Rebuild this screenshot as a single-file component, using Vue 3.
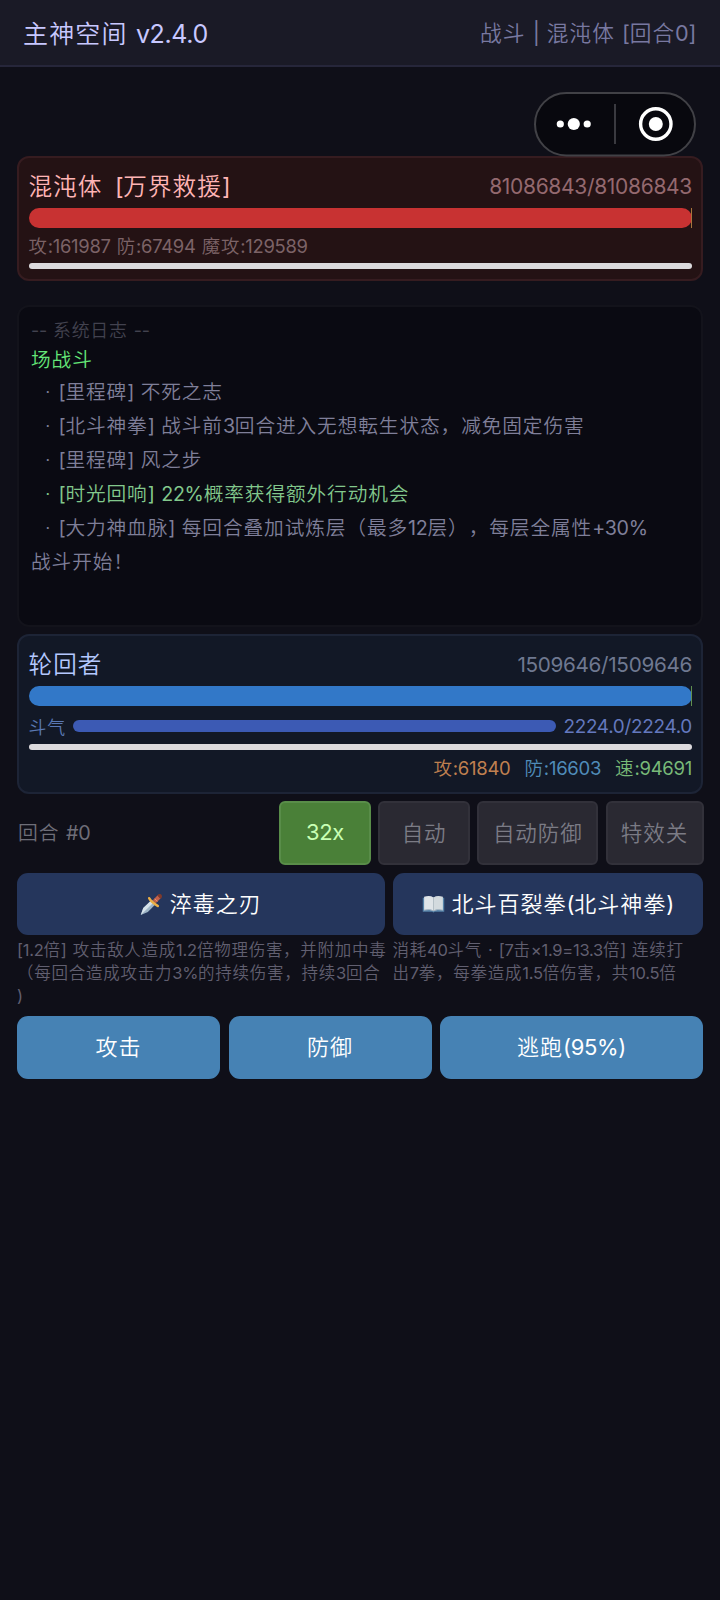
<script setup>
import { h } from 'vue'

// Splits mixed text into Han and Latin runs so that each gets its own tracking.
const T = (props) =>
  h('span', { class: 'mix' },
    (props.t.match(/[\u3000-\u9fff\uff00-\uffef]+|[^\u3000-\u9fff\uff00-\uffef]+/g) || []).map((r) =>
      h('span', { class: /^[\u3000-\u9fff\uff00-\uffef]/.test(r) ? 'han' : 'lat' }, r)))
T.props = ['t']

const log = [
  { t: '场战斗', c: 'bright first' },
  { t: '[里程碑] 不死之志', c: 'item' },
  { t: '[北斗神拳] 战斗前3回合进入无想転生状态，减免固定伤害', c: 'item' },
  { t: '[里程碑] 风之步', c: 'item' },
  { t: '[时光回响] 22%概率获得额外行动机会', c: 'item good' },
  { t: '[大力神血脉] 每回合叠加试炼层（最多12层），每层全属性+30%', c: 'item' },
  { t: '战斗开始！', c: '' },
]
</script>

<template>
  <div class="page">
    <header class="top">
      <T class="brand" t="主神空间 v2.4.0" />
      <T class="where" t="战斗 | 混沌体 [回合0]" />
    </header>

    <div class="capsule">
      <svg width="162" height="65" viewBox="0 0 162 65">
        <rect x="1" y="1" width="160" height="62.5" rx="31.2" fill="#08080e" stroke="#414146" stroke-width="2" />
        <circle cx="26.3" cy="32" r="3.6" fill="#fff" />
        <circle cx="39.8" cy="32" r="6.1" fill="#fff" />
        <circle cx="53.2" cy="32" r="3.6" fill="#fff" />
        <rect x="80" y="12" width="2" height="40" fill="#3a3a40" />
        <circle cx="121.8" cy="32" r="15.2" fill="none" stroke="#fff" stroke-width="3.4" />
        <circle cx="121.8" cy="32" r="7" fill="#fff" />
      </svg>
    </div>

    <section class="card enemy">
      <div class="head">
        <T class="name" t="混沌体  [万界救援]" />
        <T class="hp" t="81086843/81086843" />
      </div>
      <div class="bar"><i></i></div>
      <div class="stats"><T t="攻:161987 防:67494 魔攻:129589" /></div>
      <div class="action"></div>
    </section>

    <section class="log">
      <div class="sys"><T t="-- 系统日志 --" /></div>
      <div v-for="(l, i) in log" :key="i" class="line" :class="l.c">
        <span v-if="l.c.startsWith('item')" class="dot">·</span><T :t="l.t" />
      </div>
    </section>

    <section class="card player">
      <div class="head">
        <T class="name" t="轮回者" />
        <T class="hp" t="1509646/1509646" />
      </div>
      <div class="bar"><i></i></div>
      <div class="energy">
        <T class="elabel" t="斗气" />
        <div class="ebar"></div>
        <T class="eval" t="2224.0/2224.0" />
      </div>
      <div class="action"></div>
      <div class="stats">
        <T class="atk" t="攻:61840" />
        <T class="def" t="防:16603" />
        <T class="spd" t="速:94691" />
      </div>
    </section>

    <div class="controls">
      <T class="round" t="回合 #0" />
      <button class="ctl on"><T t="32x" /></button>
      <button class="ctl"><T t="自动" /></button>
      <button class="ctl wide"><T t="自动防御" /></button>
      <button class="ctl mid"><T t="特效关" /></button>
    </div>

    <div class="skills">
      <div class="skill">
        <button class="cast">
          <svg width="23" height="23" viewBox="0 0 24 24">
            <path d="M.8 23 3.4 15.6 12.2 7.4l4.2 4.2-8.2 8.2z" fill="#9db4c6" />
            <path d="M.8 23 3.4 15.6 12.2 7.4l2.2 2.2z" fill="#d6e2ea" />
            <path d="M13.4 7.6 18.4 2.4l3.2 3.2-5.2 5z" fill="#c4614a" />
            <path d="m15.4 6 2.8 2.8" stroke="#e2917a" stroke-width="1" />
            <path d="M18 2.6Q19.6.4 22 1.4q1.8 1.6.4 4l-1.2.6z" fill="#7f3a2c" />
            <path d="M9.6 5.4q1 2.2 3.6 4.2t5.4 4" fill="none" stroke="#edb045" stroke-width="2.6" stroke-linecap="round" />
          </svg>
          <T t="淬毒之刃" />
        </button>
        <div class="desc">
          <div><T t="[1.2倍] 攻击敌人造成1.2倍物理伤害，并附加中毒" /></div>
          <div><T t="（每回合造成攻击力3%的持续伤害，持续3回合" /></div>
          <div><T t=")" /></div>
        </div>
      </div>
      <div class="skill">
        <button class="cast">
          <svg width="23" height="23" viewBox="0 0 24 24">
            <path d="M.8 5h22.4v14.6H13.4l-1.4.8-1.4-.8H.8z" fill="#5582a8" />
            <path d="M2.2 4Q8 2.2 12 4.6v14Q8 16.4 2.2 18z" fill="#dfe4e8" />
            <path d="M21.8 4Q16 2.2 12 4.6v14q4-2.2 9.8-.6z" fill="#d3dade" />
            <path d="M12 4.6v14" stroke="#b4bec6" stroke-width="1" />
            <path d="M2.2 17.8q5.8-1.4 9.8.8 4-2.2 9.8-.8" fill="none" stroke="#a9b7c2" stroke-width="1" />
          </svg>
          <T t="北斗百裂拳(北斗神拳)" />
        </button>
        <div class="desc">
          <div><T t="消耗40斗气 · [7击×1.9=13.3倍] 连续打" /></div>
          <div><T t="出7拳，每拳造成1.5倍伤害，共10.5倍" /></div>
        </div>
      </div>
    </div>

    <div class="actions">
      <button class="act"><T t="攻击" /></button>
      <button class="act"><T t="防御" /></button>
      <button class="act"><T t="逃跑(95%)" /></button>
    </div>
  </div>
</template>

<style>
body {
  background: #0f0f18;
}
.mix {
  white-space: pre;
  word-spacing: 0.07em;
  text-spacing-trim: space-all;
}
.mix .han {
  letter-spacing: 0.045em;
}
.mix .lat {
  font-weight: 400;
  letter-spacing: -0.015em;
}
</style>

<style scoped>
.page {
  box-sizing: border-box;
  width: 720px;
  height: 1600px;
  overflow: hidden;
  position: relative;
  background: #0f0f18;
  font-family: Inter, "Noto Sans CJK SC", sans-serif;
  font-weight: 350;
}
.page * {
  box-sizing: border-box;
}
button {
  border: 0;
  padding: 0;
  font: inherit;
  display: flex;
  align-items: center;
  justify-content: center;
}
.top {
  height: 67px;
  padding: 0 24px;
  display: flex;
  align-items: center;
  justify-content: space-between;
  background: #1a1a26;
  border-bottom: 2px solid #26263a;
}
.brand {
  padding-bottom: 2px;
  margin-left: -1px;
  font-size: 25px;
  color: #c8c8ff;
}
.where {
  padding-bottom: 2px;
  font-size: 21.7px;
  color: #7878a0;
}
.capsule {
  position: absolute;
  left: 534px;
  top: 92px;
  height: 65px;
}
.card {
  margin: 0 17px;
  padding: 0 9px 0 9.5px;
  border-radius: 12px;
  border: 2px solid;
}
.enemy {
  margin-top: 89px;
  height: 125px;
  background: #241214;
  border-color: #361c20;
}
.head {
  height: 50px;
  padding-top: 7px;
  display: flex;
  align-items: center;
  justify-content: space-between;
}
.name {
  padding-bottom: 4px;
  font-size: 23.6px;
  word-spacing: 0;
}
.hp {
  font-size: 21px;
}
.enemy .name {
  color: #ffb4b4;
}
.enemy .hp {
  color: #94696f;
}
.bar {
  height: 20px;
  position: relative;
}
.bar i {
  display: block;
  height: 20px;
  border-radius: 10px;
}
.bar::after {
  content: "";
  position: absolute;
  right: 0;
  top: 0;
  width: 1px;
  height: 20px;
  background: #a8743c;
}
.enemy .bar i {
  background: #c83232;
}
.stats {
  font-size: 18px;
  height: 35px;
  padding-bottom: 2px;
  display: flex;
  align-items: center;
}
.enemy .stats {
  color: #7c6367;
  font-size: 18.4px;
  word-spacing: 2px;
}
.action {
  height: 6px;
  border-radius: 3px;
  background: #dcdadd;
}
.log {
  margin: 24px 17px 0;
  height: 322px;
  padding: 13px 12px 0;
  border: 2px solid #13131b;
  border-radius: 12px;
  background: #0a0a12;
}
.sys {
  height: 22px;
  line-height: 22px;
  font-size: 17.9px;
  color: #42424f;
}
.line {
  height: 34px;
  line-height: 33px;
  font-size: 19.7px;
  color: #7f7f99;
  white-space: nowrap;
}
.line.first {
  line-height: 37px;
}
.item {
  padding-left: 14px;
}
.dot {
  display: inline-block;
  width: 13.5px;
}
.bright {
  color: #64e678;
}
.good {
  color: #82c88c;
}
.player {
  margin-top: 7px;
  height: 160px;
  background: #121826;
  border-color: #1d2436;
}
.player .name {
  color: #b4c8ff;
}
.player .hp {
  color: #6f7890;
  font-size: 20.7px;
}
.player .bar i {
  background: #3278c8;
}
.player .bar::after {
  background: #5f8f50;
}
.energy {
  display: flex;
  align-items: center;
  height: 38px;
  padding-top: 2px;
}
.elabel {
  width: 44.5px;
  padding-bottom: 1px;
  font-size: 17.9px;
  color: #5a78b4;
}
.ebar {
  flex: 1;
  height: 12px;
  border-radius: 6px;
  background: #3c5ab4;
}
.eval {
  width: 136px;
  text-align: right;
  font-size: 18.9px;
  color: #6478be;
}
.player .stats {
  justify-content: flex-end;
  gap: 14px;
  font-size: 18.5px;
}
.atk {
  color: #c08050;
}
.def {
  color: #508cb9;
}
.spd {
  color: #78b978;
}
.controls {
  margin: 7px 16.5px 0 18px;
  height: 64px;
  display: flex;
  gap: 7.2px;
}
.round {
  flex: 1;
  align-self: center;
  padding-bottom: 4px;
  font-size: 19.8px;
  color: #6e6e78;
}
.ctl {
  width: 92px;
  padding-bottom: 4px;
  font-size: 21.5px;
  border-radius: 6px;
  border: 2px solid #32313a;
  background: #2a2932;
  color: #7b7b85;
}
.ctl.on {
  padding-bottom: 2px;
  font-size: 22px;
  background: #4a8038;
  border-color: #598d49;
  color: #c8ffb4;
}
.wide {
  width: 121px;
}
.mid {
  width: 98px;
}
.skills {
  margin: 8px 17px 0;
  height: 143px;
  display: grid;
  grid-template-columns: 367.5px 310.5px;
  gap: 8px;
}
.cast {
  width: 100%;
  height: 62px;
  padding-bottom: 5px;
  gap: 7px;
  border-radius: 11px;
  background: #25365c;
  color: #fff;
  font-size: 22px;
}
.cast svg {
  margin-top: 5px;
}
.desc {
  padding-top: 4px;
  font-size: 16.5px;
  line-height: 23px;
  color: #615f70;
  white-space: nowrap;
}
.desc .mix {
  word-spacing: 0.1em;
}
.actions {
  margin: 0 17px;
  display: grid;
  grid-template-columns: 203px 203px 1fr;
  gap: 8.5px;
}
.act {
  height: 63px;
  padding-bottom: 5px;
  border-radius: 11px;
  background: #4682b4;
  color: #fff;
  font-size: 22px;
}
</style>
